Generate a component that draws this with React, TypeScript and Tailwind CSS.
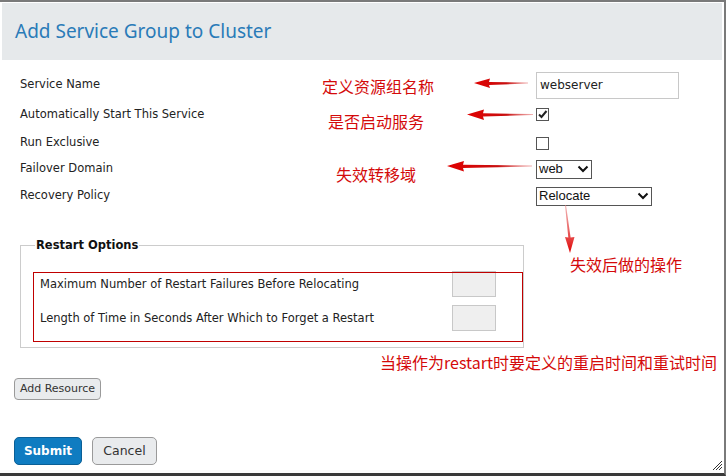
import React from "react";

const ui = { fontFamily: '"DejaVu Sans", Verdana, sans-serif' };
const cjk = { fontFamily: '"Noto Sans CJK SC", "Noto Sans", sans-serif' };
const arial = { fontFamily: '"Liberation Sans", Arial, sans-serif' };

function Chevron() {
  return (
    <svg className="h-[10px] w-[12px]" viewBox="0 0 12 10" fill="none">
      <path d="M1.5 2.5 L6 7 L10.5 2.5" stroke="#111" strokeWidth="2" />
    </svg>
  );
}

function FormRow({
  label,
  height,
  children,
}: {
  label: string;
  height: string;
  children: React.ReactNode;
}) {
  return (
    <div className={`grid grid-cols-[516px_1fr] items-center ${height}`}>
      <span className="text-[11.5px] text-[#222]">{label}</span>
      <div className="flex items-center">{children}</div>
    </div>
  );
}

function Checkbox({ checked }: { checked?: boolean }) {
  return (
    <span className="flex h-[13px] w-[13px] items-center justify-center border border-[#555] bg-white">
      {checked ? (
        <svg className="h-[11px] w-[11px]" viewBox="0 0 11 11" fill="none">
          <path d="M2 5.5 L4.5 8 L9.5 2" stroke="#222" strokeWidth="2" />
        </svg>
      ) : null}
    </span>
  );
}

function Arrows() {
  return (
    <svg
      className="pointer-events-none absolute left-0 top-[-2px]"
      width="726"
      height="476"
      viewBox="0 0 726 476"
    >
      <defs>
        <linearGradient id="fadeL" x1="0" x2="1" y1="0" y2="0">
          <stop offset="0" stopColor="#e00000" />
          <stop offset="0.6" stopColor="#c81010" />
          <stop offset="1" stopColor="#e88080" stopOpacity="0.6" />
        </linearGradient>
        <linearGradient id="fadeD" x1="0" x2="0" y1="0" y2="1">
          <stop offset="0" stopColor="#e88080" stopOpacity="0.6" />
          <stop offset="1" stopColor="#e00000" />
        </linearGradient>
      </defs>
      <polygon
        fill="url(#fadeL)"
        points="474,83 490,78.5 489,82 528,82.6 528,83.4 489,85 490,88"
      />
      <polygon
        fill="url(#fadeL)"
        points="467,114.5 484,109.5 483,113.3 533,114 533,115 483,116.5 484,120"
      />
      <polygon
        fill="url(#fadeL)"
        points="447,166 464,161 463,164.8 532,165.5 532,166.6 463,168 464,171.5"
      />
      <polygon
        fill="url(#fadeD)"
        points="570,253 565,237 568.3,237.5 565,205 566,205 570.6,237.5 574.5,237"
      />
      <g stroke="#333" strokeWidth="1">
        <line x1="713" y1="470" x2="722" y2="461" />
        <line x1="716" y1="470" x2="722" y2="464" />
        <line x1="719" y1="470" x2="722" y2="467" />
      </g>
    </svg>
  );
}

export default function App() {
  return (
    <div
      className="relative h-[476px] w-[726px] overflow-hidden border-t-2 border-r-2 border-b-[3px] border-t-[#7a7a7a] border-r-[#7a7a7a] border-b-[#3a3a3a] bg-white"
      style={ui}
    >
      <div className="mx-[2px] mt-px flex h-[57px] items-center bg-[#e6e9eb] pl-[13px]">
        <h1
          className="text-[19px] text-[#2a7bb8]"
          style={{ fontFamily: '"Noto Sans", "DejaVu Sans", sans-serif' }}
        >
          Add Service Group to Cluster
        </h1>
      </div>

      <div className="pl-[20px] pt-[11px]">
        <FormRow label="Service Name" height="h-[28px]">
          <span
            className="flex h-[27px] w-[143px] items-center border border-[#c8c8c8] bg-white pl-[3px] text-[12px] text-[#222]"
            style={{ fontFamily: "Verdana, 'DejaVu Sans', sans-serif" }}
          >
            webserver
          </span>
        </FormRow>
        <FormRow label="Automatically Start This Service" height="h-[31px]">
          <Checkbox checked />
        </FormRow>
        <FormRow label="Run Exclusive" height="h-[26px]">
          <Checkbox />
        </FormRow>
        <FormRow label="Failover Domain" height="h-[26px]">
          <span
            className="flex h-[19px] w-[56px] items-center justify-between border border-[#555] pl-[2px] pr-[2px] text-[13px] text-[#111]"
            style={arial}
          >
            web
            <Chevron />
          </span>
        </FormRow>
        <FormRow label="Recovery Policy" height="h-[28px]">
          <span
            className="flex h-[19px] w-[116px] items-center justify-between border border-[#555] pl-[2px] pr-[2px] text-[13px] text-[#111]"
            style={arial}
          >
            Relocate
            <Chevron />
          </span>
        </FormRow>

        <fieldset className="mt-[27px] h-[111px] w-[504px] border border-[#cccccc] pl-[14px] pr-[27px]">
          <legend className="px-px text-[11.5px] font-bold text-[#111]">Restart Options</legend>
          <div className="mt-[17px] flex flex-col gap-[8px] pl-[5px]">
            <div className="flex h-[26px] items-center justify-between">
              <span className="text-[11.5px] text-[#222]">
                Maximum Number of Restart Failures Before Relocating
              </span>
              <span className="h-[26px] w-[44px] border border-[#c8c8c8] bg-[#efefef]" />
            </div>
            <div className="flex h-[26px] items-center justify-between">
              <span className="text-[11.5px] text-[#222]">
                Length of Time in Seconds After Which to Forget a Restart
              </span>
              <span className="h-[26px] w-[44px] border border-[#c8c8c8] bg-[#efefef]" />
            </div>
          </div>
        </fieldset>
      </div>

      <div className="pl-[14px] pt-[27px]">
        <button className="h-[22px] w-[87px] rounded-[4px] border border-[#9a9a9a] bg-[#e9ebed] text-[11px] text-[#333]">
          Add Resource
        </button>
        <div className="mt-[37px] flex gap-[10px]">
          <button className="h-[28px] w-[68px] rounded-[5px] border border-[#0a5f96] bg-[#0f7cc1] text-[12px] font-bold text-white">
            Submit
          </button>
          <button className="h-[28px] w-[65px] rounded-[5px] border border-[#9a9a9a] bg-[#e9ebed] text-[12.5px] text-[#333]">
            Cancel
          </button>
        </div>
      </div>

      {/* annotations */}
      <div className="pointer-events-none absolute left-[322px] top-[76px] text-[16px] leading-none text-[#d40a0a]" style={cjk}>
        定义资源组名称
      </div>
      <div className="pointer-events-none absolute left-[328px] top-[111px] text-[16px] leading-none text-[#d40a0a]" style={cjk}>
        是否启动服务
      </div>
      <div className="pointer-events-none absolute left-[336px] top-[164px] text-[16px] leading-none text-[#d40a0a]" style={cjk}>
        失效转移域
      </div>
      <div className="pointer-events-none absolute left-[570px] top-[254px] text-[16px] leading-none text-[#d40a0a]" style={cjk}>
        失效后做的操作
      </div>
      <div className="pointer-events-none absolute left-[380px] top-[352px] text-[16px] leading-none text-[#d40a0a]" style={cjk}>
        当操作为restart时要定义的重启时间和重试时间
      </div>
      <div className="pointer-events-none absolute left-[33px] top-[270px] h-[70px] w-[490px] border border-[#c00000]" />
      <Arrows />
    </div>
  );
}
